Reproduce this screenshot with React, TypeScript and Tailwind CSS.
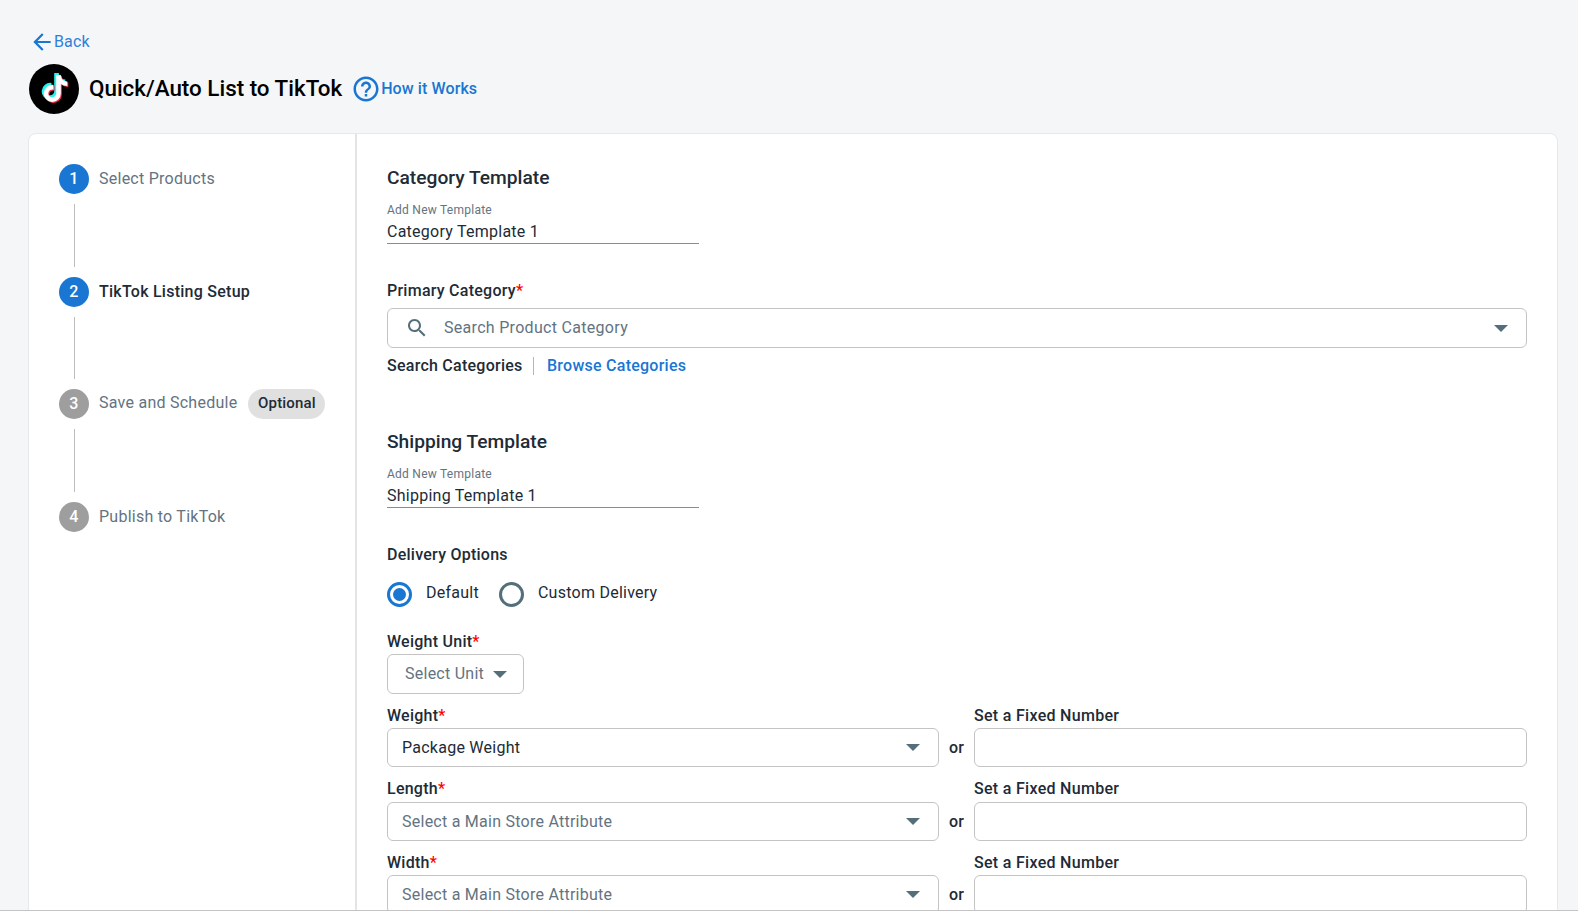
import { FaTiktok } from "react-icons/fa";

const font = { fontFamily: "Roboto, sans-serif" };

function Caret({ className = "" }: { className?: string }) {
  return (
    <svg viewBox="0 0 14 7" className={`h-[7px] w-[14px] shrink-0 ${className}`}>
      <path d="M0 0l7 7 7-7z" fill="#546e7a" />
    </svg>
  );
}

function Req({ children }: { children: string }) {
  return (
    <div className="h-[20px] text-base leading-[20px] font-medium text-[#212b36]">
      {children}
      <span className="text-[#ff0000]">*</span>
    </div>
  );
}

function Heading({ children }: { children: string }) {
  return <div className="h-[24px] text-[19.2px] leading-[24px] font-medium tracking-normal text-[#212b36]">{children}</div>;
}

function TemplateName({ value }: { value: string }) {
  return (
    <div className="mt-[12px] w-[312px] border-b border-[#8c8c8c] pb-[1px]">
      <div className="h-[16px] text-xs leading-[16px] text-[#637381]">Add New Template</div>
      <div className="mt-[4px] h-[20px] text-base leading-[20px] text-[#212b36]">{value}</div>
    </div>
  );
}

function AttrRow({
  label,
  value,
  className = "",
  gap = "mt-[2px]",
}: {
  label: string;
  value?: string;
  className?: string;
  gap?: string;
}) {
  return (
    <div className={`flex items-end ${className}`}>
      <div className="w-[552px] shrink-0">
        <Req>{label}</Req>
        <div className={`${gap} flex h-[39px] items-center rounded-md border border-[#c4c4c4] pr-[18px] pl-[14px]`}>
          <span className={value ? "flex-1 text-[#212b36]" : "flex-1 text-[#637381]"}>
            {value ?? "Select a Main Store Attribute"}
          </span>
          <Caret />
        </div>
      </div>
      <div className="flex h-[39px] w-[35px] shrink-0 items-center justify-center font-medium text-[#212b36]">or</div>
      <div className="flex-1">
        <div className="h-[20px] leading-[20px] font-medium tracking-[0.3px] text-[#212b36]">Set a Fixed Number</div>
        <div className={`${gap} h-[39px] rounded-md border border-[#c4c4c4]`} />
      </div>
    </div>
  );
}

const steps = [
  { n: 1, label: "Select Products", on: true, line: "h-[63px]" },
  { n: 2, label: "TikTok Listing Setup", on: true, current: true, line: "h-[62px]" },
  { n: 3, label: "Save and Schedule", on: false, badge: "Optional", line: "h-[63px]" },
  { n: 4, label: "Publish to TikTok", on: false },
];

export default function App() {
  return (
    <div
      style={font}
      className="h-[911px] overflow-hidden border-b border-[#c4c4c4] bg-[#f5f6f8] pt-[29px] pl-[28px] text-base tracking-[0.25px]"
    >
      <div className="flex h-[24px] translate-y-[1px] items-center tracking-[0.15px] text-[#2f80d8]">
        <svg viewBox="0 0 24 24" className="ml-[1px] h-[26px] w-[26px]" fill="#1976d2">
          <path d="M20 11H7.83l5.59-5.59L12 4l-8 8 8 8 1.41-1.41L7.83 13H20v-2z" />
        </svg>
        <span className="-ml-[1px]">Back</span>
      </div>

      <div className="mt-[11px] ml-[1px] flex h-[50px] items-center">
        <div className="relative h-[50px] w-[50px] rounded-full bg-black">
          <FaTiktok className="absolute top-[9px] left-[11px] text-[27px] text-[#25f4ee]" />
          <FaTiktok className="absolute top-[12px] left-[14px] text-[27px] text-[#fe2c55]" />
          <FaTiktok className="absolute top-[10.5px] left-[12.5px] text-[27px] text-white" />
        </div>
        <h1 className="ml-[10px] text-[22.4px] font-medium tracking-normal text-black">Quick/Auto List to TikTok</h1>
        <svg viewBox="0 0 24 24" className="ml-[9px] h-[30px] w-[30px]" fill="#1976d2">
          <path d="M11 18h2v-2h-2v2zm1-16C6.48 2 2 6.48 2 12s4.48 10 10 10 10-4.48 10-10S17.52 2 12 2zm0 18c-4.41 0-8-3.59-8-8s3.59-8 8-8 8 3.59 8 8-3.59 8-8 8zm0-14c-2.21 0-4 1.79-4 4h2c0-1.1.9-2 2-2s2 .9 2 2c0 2-3 1.75-3 5h2c0-2.25 3-2.5 3-5 0-2.21-1.79-4-4-4z" />
        </svg>
        <span className="font-medium tracking-[0.1px] text-[#1976d2]">How it Works</span>
      </div>

      <div className="mt-[19px] flex min-h-[900px] w-[1530px] rounded-lg border border-[#e6e8ea] bg-white">
        <div className="w-[328px] shrink-0 border-r-2 border-[#e4e4e4] pt-[30px] pl-[30px]">
          {steps.map((s) => (
            <div key={s.n}>
              <div className="flex h-[30px] items-center">
                <div
                  className={`flex h-[30px] w-[30px] items-center justify-center rounded-full text-base font-medium text-white ${
                    s.on ? "bg-[#1976d2]" : "bg-[#9e9e9e]"
                  }`}
                >
                  {s.n}
                </div>
                <span
                  className={`ml-[10px] ${s.badge ? "-translate-y-[1px]" : ""} ${
                    s.current ? "font-medium text-[#212b36]" : "text-[#637381]"
                  }`}
                >
                  {s.label}
                </span>
                {s.badge && (
                  <span className="ml-[11px] flex h-[30px] w-[77px] items-center justify-center rounded-full bg-[#e0e0e0] pb-[2px] text-[15px] font-medium tracking-[0.15px] text-[#212b36]">
                    {s.badge}
                  </span>
                )}
              </div>
              {s.line && <div className={`my-[10px] ml-[14.5px] w-px bg-[#bdbdbd] ${s.line}`} />}
            </div>
          ))}
        </div>

        <div className="flex-1 px-[30px] pt-[32px]">
          <Heading>Category Template</Heading>
          <TemplateName value="Category Template 1" />

          <div className="mt-[37px]">
            <Req>Primary Category</Req>
          </div>
          <div className="mt-[7px] flex h-[40px] items-center rounded-md border border-[#c4c4c4] pr-[18px] pl-[17px]">
            <svg viewBox="0 0 24 24" className="h-[24px] w-[24px]" fill="#546e7a">
              <path d="M15.5 14h-.79l-.28-.27C15.41 12.59 16 11.11 16 9.5 16 5.91 13.09 3 9.5 3S3 5.91 3 9.5 5.91 16 9.5 16c1.61 0 3.09-.59 4.23-1.57l.27.28v.79l5 4.99L20.49 19l-4.99-5zm-6 0C7.01 14 5 11.99 5 9.5S7.01 5 9.5 5 14 7.01 14 9.5 11.99 14 9.5 14z" />
            </svg>
            <span className="ml-[15px] flex-1 tracking-[0.3px] text-[#637381]">Search Product Category</span>
            <Caret />
          </div>
          <div className="mt-[8px] flex h-[20px] items-center font-medium">
            <span className="text-[#212b36]">Search Categories</span>
            <span className="ml-[10px] h-[18px] w-px bg-[#b0b8bf]" />
            <span className="ml-[13.5px] text-[#1976d2]">Browse Categories</span>
          </div>

          <div className="mt-[54px]">
            <Heading>Shipping Template</Heading>
          </div>
          <TemplateName value="Shipping Template 1" />

          <div className="mt-[37px] h-[20px] leading-[20px] font-medium text-[#212b36]">Delivery Options</div>
          <div className="mt-[17px] flex h-[25px] items-center">
            <span className="flex h-[25px] w-[25px] items-center justify-center rounded-full border-[3px] border-[#1976d2]">
              <span className="h-[13px] w-[13px] rounded-full bg-[#1976d2]" />
            </span>
            <span className="ml-[14px] -translate-y-[2px] text-[#212b36]">Default</span>
            <span className="ml-[20px] h-[25px] w-[25px] rounded-full border-[3px] border-[#546e7a]" />
            <span className="ml-[14px] -translate-y-[2px] text-[#212b36]">Custom Delivery</span>
          </div>

          <div className="mt-[25px]">
            <Req>Weight Unit</Req>
          </div>
          <div className="mt-[2px] flex h-[40px] w-[137px] items-center rounded-md border border-[#c4c4c4] pl-[17px]">
            <span className="text-[#637381]">Select Unit</span>
            <Caret className="ml-[9px]" />
          </div>

          <AttrRow label="Weight" value="Package Weight" className="mt-[12px]" />
          <AttrRow label="Length" className="mt-[12px]" gap="mt-[3px]" />
          <AttrRow label="Width" className="mt-[12px]" />
        </div>
      </div>
    </div>
  );
}
